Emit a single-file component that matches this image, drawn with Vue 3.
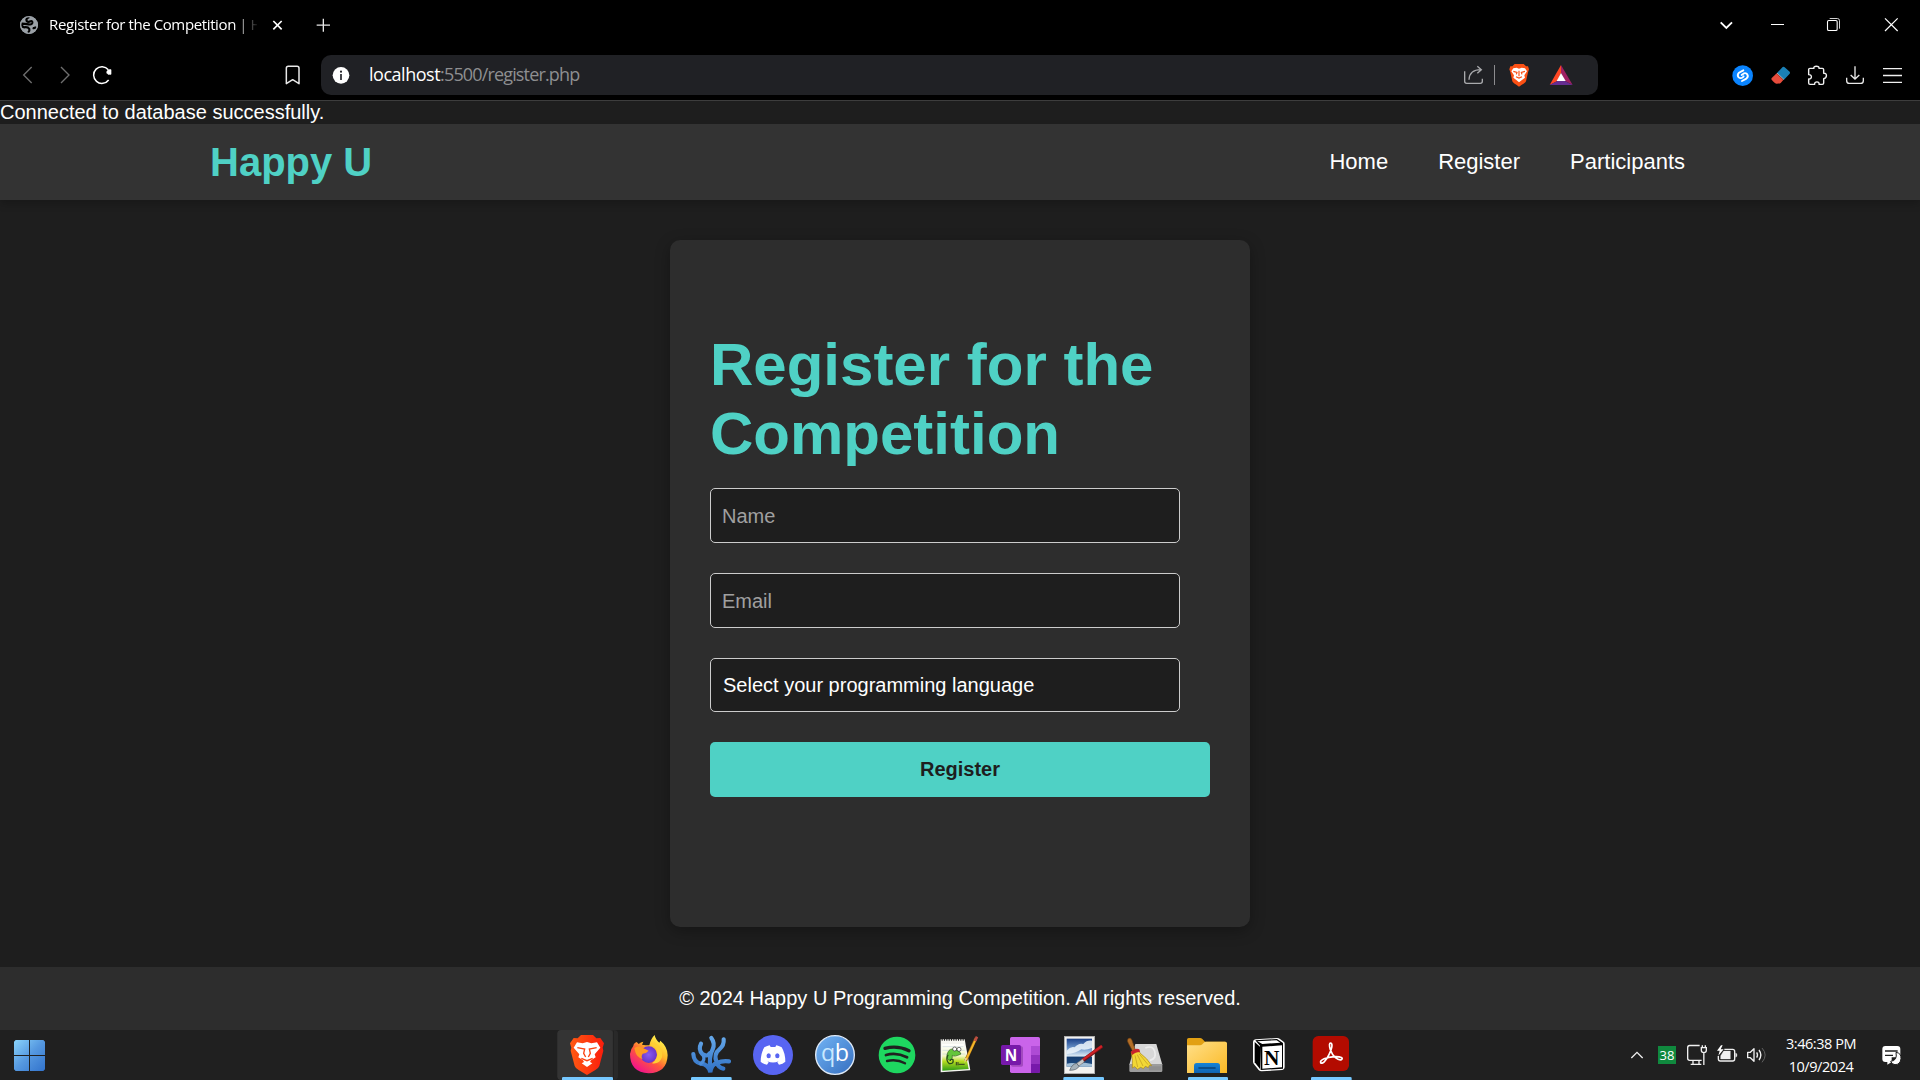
<script setup>
import { ref } from 'vue'

const navLinks = ['Home', 'Register', 'Participants']
const name = ref('')
const email = ref('')
const language = ref('')
</script>

<template>
  <div class="screen">
    <div class="tabs">
      <svg class="ic globe" viewBox="42 0 90 150">
        <circle cx="87" cy="75" r="27" fill="#9aa0a6" />
        <path d="M88 51 Q76 56 80 63 Q84 68 92 64 Q98 62 97 69 Q95 75 86 73 Q74 71 66 71 Q64 79 72 82 Q84 80 88 87 Q90 92 84 98 M98 84 Q106 86 108 80" fill="none" stroke="#000" stroke-width="6.500" />
        <circle cx="87" cy="75" r="25" fill="none" stroke="#9aa0a6" stroke-width="4" />
      </svg>
      <div class="tab-title">Register for the Competition | H</div>
      <svg class="ic tab-close" viewBox="786 0 90 150"><path d="M820 63 L845 88 M845 63 L820 88" stroke="#fff" stroke-width="5" /></svg>
      <svg class="ic tab-plus" viewBox="924 0 90 150"><path d="M970 56 V95 M950 75.500 H990" stroke="#e8e8e8" stroke-width="4" /></svg>
      <div class="grow"></div>
      <svg class="ic" viewBox="783 0 90 150"><path d="M812 67 L829 84 L846 67" fill="none" stroke="#fff" stroke-width="5.500" /></svg>
      <svg class="ic win-min" viewBox="936 0 90 150"><path d="M963 73.500 H1002" stroke="#fff" stroke-width="3" /></svg>
      <svg class="ic win-max" viewBox="1104 0 90 150">
        <rect x="1132.500" y="61.500" width="29" height="30" rx="4" fill="none" stroke="#fff" stroke-width="3.300" />
        <path d="M1139 55.500 H1162 Q1168.500 55.500 1168.500 62 V86" fill="none" stroke="#d0d0d0" stroke-width="3" />
      </svg>
      <svg class="ic win-close" viewBox="1278 0 90 150"><path d="M1305 55 L1343 93 M1343 55 L1305 93" stroke="#fff" stroke-width="3.600" /></svg>
    </div>

    <div class="toolbar">
      <svg class="ic back" viewBox="36 150 90 150"><path d="M95 201 L71 225 L95 249" fill="none" stroke="#6f6f6f" stroke-width="4" /></svg>
      <svg class="ic fwd" viewBox="150 150 90 150"><path d="M183 201 L207 225 L183 249" fill="none" stroke="#6f6f6f" stroke-width="4" /></svg>
      <svg class="ic reload" viewBox="261 150 90 150">
        <path d="M325 209 A25 25 0 1 0 326 240" fill="none" stroke="#fff" stroke-width="4.500" />
        <path d="M333 209 V223 H324 Q318 220 321 213 Q326 208 333 209 Z" fill="#fff" stroke="#fff" stroke-width="2" />
      </svg>
      <svg class="ic bookmark" viewBox="834 150 90 150"><path d="M859 251 V205 Q859 199 865 199 H891 Q897 199 897 205 V251 L878 239 Z" fill="none" stroke="#e8e8e8" stroke-width="4.500" stroke-linejoin="round" /></svg>
      <div class="address">
        <svg class="ic info" viewBox="978 150 90 150">
          <circle cx="1023" cy="226" r="25" fill="#fff" />
          <circle cx="1023" cy="215" r="3.200" fill="#202127" />
          <path d="M1023 222 V240" stroke="#202127" stroke-width="5" />
        </svg>
        <div class="url"><span class="host">localhost</span>:5500/register.php</div>
        <div class="grow"></div>
        <svg class="ic" viewBox="24 150 90 150">
          <path d="M44 214 V244 Q44 250 50 250 H91 Q97 250 97 244 V236 M57 239 C58 220 70 209 93 209 M82 199 L94 209 L82 220" fill="none" stroke="#a9aaad" stroke-width="4" />
        </svg>
        <div class="divider"></div>
        <svg class="ic brave" viewBox="162 150 90 150">
          <path d="M194 192 H221 L228 199 H234 L237 208 L234 217 L228 244 Q226 249 207 260 Q189 249 187 244 L181 217 L178 208 L181 199 H187 Z" fill="#fb5014" />
          <path d="M190 205 L200 203 L207 206 L215 203 L225 205 L231 214 L223 226 L225 233 L217 239 L207 247 L198 239 L190 233 L192 226 L184 214 Z" fill="#fff" />
          <path d="M190 214 L201 217 L199 223 M225 214 L214 217 L216 223 M207 212 V229 M198 230 L207 234 L216 230" fill="none" stroke="#fb5014" stroke-width="3.500" />
        </svg>
        <svg class="ic bat" viewBox="288 150 90 150">
          <path d="M333 195 L299 255 L322 243 L333 219 Z" fill="#ff4724" />
          <path d="M333 195 L368 255 L345 243 L333 219 Z" fill="#9e1f63" />
          <path d="M299 255 H368 L345 243 H322 Z" fill="#662d91" />
          <path d="M333 219 L320 243 H347 Z" fill="#fff" />
        </svg>
      </div>
      <div class="grow"></div>
      <svg class="ic" viewBox="834 150 90 150">
        <circle cx="878" cy="227" r="31" fill="#0a84ff" />
        <path d="M880 211 L867 218 Q860 225 866 232 Q872 237 878 232 L881 229 M876 243 L889 236 Q897 229 891 222 Q885 217 879 222 L875 225" fill="none" stroke="#fff" stroke-width="5.500" stroke-linecap="round" />
      </svg>
      <svg class="ic eraser" viewBox="945 150 90 150">
        <path d="M981 219 L998 201 Q1001 199 1004 202 L1019 215 Q1021 218 1019 221 L1002 239 Z" fill="#1a80b6" />
        <path d="M980 220 L1000 240 L992 249 Q990 251 980 251 Q975 251 965 239 Q963 236 966 233 Z" fill="#e74c3c" />
        <path d="M981 219 L1002 239" stroke="#f1e9e4" stroke-width="2" />
      </svg>
      <svg class="ic puzzle" viewBox="1059 150 90 150">
        <path d="M1076 208 Q1076 205 1080 205 H1092 C1088 197 1109 196 1107 205 H1117 Q1121 205 1121 209 V220 C1132 218 1132 234 1121 236 V249 Q1121 253 1117 253 H1107 C1110 243 1092 243 1094 253 H1080 Q1076 253 1076 249 V237 C1087 238 1087 223 1076 224 Z" fill="none" stroke="#f0f0f0" stroke-width="4.200" stroke-linejoin="round" />
      </svg>
      <svg class="ic dl" viewBox="1170 150 90 150"><path d="M1215 199 V236 M1202 225 L1215 237 L1228 225 M1190 233 V242 Q1190 250 1198 250 H1232 Q1240 250 1240 242 V233" fill="none" stroke="#e8e8e8" stroke-width="4" /></svg>
      <svg class="ic menu" viewBox="1281 150 90 150"><path d="M1299 206 H1356 M1299 226.500 H1356 M1299 247 H1356" stroke="#f0f0f0" stroke-width="4" /></svg>
    </div>

    <div class="page">
      <div class="notice">Connected to database successfully.</div>
      <header class="site-header">
        <div class="container">
          <h1 class="logo">Happy U</h1>
          <nav class="nav">
            <a v-for="link in navLinks" :key="link">{{ link }}</a>
          </nav>
        </div>
      </header>
      <main class="main">
        <section class="card">
          <h2 class="title">Register for the Competition</h2>
          <form class="form" @submit.prevent>
            <input v-model="name" class="field" type="text" placeholder="Name" />
            <input v-model="email" class="field" type="email" placeholder="Email" />
            <select v-model="language" class="field select">
              <option value="">Select your programming language</option>
            </select>
            <button class="submit" type="submit">Register</button>
          </form>
        </section>
      </main>
      <footer class="site-footer">© 2024 Happy U Programming Competition. All rights reserved.</footer>
    </div>

    <div class="taskbar">
      <svg class="start" viewBox="42 267 93 93">
        <defs>
          <linearGradient id="win" x1="42" y1="267" x2="135" y2="360" gradientUnits="userSpaceOnUse">
            <stop offset="0" stop-color="#8ad4fb" /><stop offset=".5" stop-color="#5598e0" /><stop offset="1" stop-color="#3273cc" />
          </linearGradient>
        </defs>
        <path d="M47 267 H87 V312 H42 V272 Z M90 267 H130 L135 272 V312 H90 Z M42 315 H87 V360 H47 L42 355 Z M90 315 H135 V355 L130 360 H90 Z" fill="url(#win)" />
      </svg>

      <div class="apps">
        <!-- Brave -->
        <svg class="app" viewBox="48 30 186 150">
          <defs><linearGradient id="brv"><stop offset="0" stop-color="#ff5a12" /><stop offset="1" stop-color="#fb1d0c" /></linearGradient></defs>
          <rect x="52" y="30" width="182" height="150" rx="12" fill="#292929" />
          <rect x="52" y="30" width="168" height="150" rx="12" fill="#343434" />
          <path d="M220 32 V178" stroke="#1c1c1c" stroke-width="2" />
          <path d="M123 45 H159 L169 55 L181 54 L192 70 L188 83 L190 92 L178 138 Q176 144 166 150 L141 165 L116 150 Q106 144 104 138 L92 92 L94 83 L90 70 L101 54 L113 55 Z" fill="url(#brv)" />
          <path d="M111 67 L128 70 L141 66 L154 70 L171 67 L181 83 L164 103 L167 112 L153 121 L150 126 L157 130 L141 141 L125 130 L132 126 L129 121 L115 112 L118 103 L101 83 Z" fill="#fff" />
          <path d="M112 83 L134 87 L131 100 L137 111 M170 83 L148 87 L151 100 L145 111 M124 115 L141 122 L158 115" fill="none" stroke="#fb4311" stroke-width="4" />
          <path d="M66 180 V174 Q66 171 70 171 H215 Q219 171 219 174 V180 Z" fill="#76c8ff" />
        </svg>
        <!-- Firefox -->
        <svg class="app" viewBox="234 30 186 150">
          <defs>
            <linearGradient id="ff" x1=".85" y1=".1" x2=".25" y2=".95"><stop offset="0" stop-color="#fff44f" /><stop offset=".35" stop-color="#ffb829" /><stop offset=".6" stop-color="#ff5a3a" /><stop offset="1" stop-color="#f0138b" /></linearGradient>
            <radialGradient id="ffp"><stop offset="0" stop-color="#8a5bf0" /><stop offset="1" stop-color="#6a35c8" /></radialGradient>
          </defs>
          <path d="M290 66 L296 72 Q302 66 310 65 L306 74 Q316 76 328 76 Q332 56 344 45 Q346 58 358 68 L361 62 Q383 80 383 106 Q381 159 326 160 Q270 157 270 102 Q272 86 280 78 Q280 70 290 66 Z" fill="url(#ff)" />
          <circle cx="326" cy="104" r="25" fill="url(#ffp)" />
          <path d="M283 84 Q294 76 304 82 L326 92 Q320 100 308 101 Q302 110 308 118 Q290 112 286 96 Z" fill="#ff9a22" />
          <path d="M332 76 Q350 78 352 96 Q354 116 336 130 Q358 134 366 112 Q372 86 346 68 Q338 66 332 76Z" fill="#ffcf34" />
        </svg>
        <!-- VSCodium -->
        <svg class="app" viewBox="420 30 186 150">
          <defs><linearGradient id="cod" gradientUnits="userSpaceOnUse" x1="0" y1="45" x2="0" y2="165"><stop offset="0" stop-color="#68abec" /><stop offset="1" stop-color="#2c6cc0" /></linearGradient></defs>
          <path d="M483 71 Q474 88 487 102 Q502 112 509 100 M460 102 Q461 126 482 131 Q505 132 511 157 Q514 134 530 129 Q548 121 567 124 M514 54 Q526 70 518 88 Q505 112 512 150 M551 58 Q553 76 538 88 Q520 102 530 127 Q535 143 550 146" fill="none" stroke="url(#cod)" stroke-width="12.500" stroke-linecap="round" />
          <path d="M482 131 Q497 121 489 104" fill="none" stroke="#4b8edb" stroke-width="10" stroke-linecap="round" />
          <path d="M453 180 V174 Q453 171 457 171 H571 Q575 171 575 174 V180 Z" fill="#76c8ff" />
        </svg>
        <!-- Discord -->
        <svg class="app" viewBox="606 30 186 150">
          <circle cx="699" cy="105" r="60" fill="#5865f2" />
          <path d="M673 82 Q682 77 689 76 L692 81 H706 L709 76 Q716 77 725 82 Q736 100 736 125 Q728 132 717 134 L712 127 L716 124 Q699 131 682 124 L686 127 L681 134 Q670 132 662 125 Q662 100 673 82 Z" fill="#fff" />
          <ellipse cx="686" cy="107" rx="6.500" ry="7.500" fill="#5865f2" /><ellipse cx="712" cy="107" rx="6.500" ry="7.500" fill="#5865f2" />
        </svg>
        <!-- qBittorrent -->
        <svg class="app" viewBox="-48 30 186 150">
          <defs><linearGradient id="qb" x1="0" y1="0" x2="1" y2="1"><stop offset="0" stop-color="#72b4f5" /><stop offset="1" stop-color="#356ebf" /></linearGradient></defs>
          <circle cx="45" cy="105" r="58" fill="url(#qb)" stroke="#dfeaf8" stroke-width="4" />
          <text x="3" y="124" class="qb" fill="#c8e8ff">q</text><text x="44" y="124" class="qb" fill="#fff">b</text>
        </svg>
        <!-- Spotify -->
        <svg class="app" viewBox="138 30 186 150">
          <circle cx="231" cy="105" r="55" fill="#1ed760" />
          <path d="M195 85 Q232 75 267 92" fill="none" stroke="#202020" stroke-width="10" stroke-linecap="round" />
          <path d="M198 105 Q230 96 261 112" fill="none" stroke="#202020" stroke-width="8.500" stroke-linecap="round" />
          <path d="M201 123 Q230 116 255 130" fill="none" stroke="#202020" stroke-width="7" stroke-linecap="round" />
        </svg>
        <!-- Notepad++ -->
        <svg class="app" viewBox="324 30 186 150">
          <defs><linearGradient id="npp" x2="0" y2="1"><stop offset="0" stop-color="#fff" /><stop offset=".45" stop-color="#f4f7c8" /><stop offset=".65" stop-color="#b8dc20" /><stop offset="1" stop-color="#2f9d16" /></linearGradient></defs>
          <path d="M362 58 H434 L451 151 L362 157 Z" fill="#f5f5f0" />
          <path d="M366 72 H431 L446 147 L367 152 Z" fill="url(#npp)" />
          <path d="M365 59 H434" stroke="#222" stroke-width="7" stroke-dasharray="3 4" />
          <path d="M368 80 H430 M368 91 H434 M368 102 H436" stroke="#b9c9d8" stroke-width="1.500" />
          <path d="M384 96 Q390 84 403 88 Q421 92 423 102 Q402 112 397 106 Q398 124 386 120 Q376 112 384 96 Z" fill="#65c53b" stroke="#32601e" stroke-width="2" />
          <path d="M384 104 Q376 122 388 131 Q402 132 399 119 Q391 116 391 123" fill="none" stroke="#274f1b" stroke-width="4" />
          <circle cx="404" cy="87" r="6" fill="#fff" stroke="#333" stroke-width="2" /><circle cx="417" cy="88" r="6" fill="#fff" stroke="#333" stroke-width="2" />
          <path d="M409 126 V136 M414 126 V136 M416 133 H434" stroke="#222" stroke-width="2.500" />
          <path d="M468 54 L437 122" stroke="#8b5a12" stroke-width="9" /><path d="M467 58 L438 120" stroke="#f5b629" stroke-width="6" />
          <path d="M471 50 L465 63" stroke="#bd4d42" stroke-width="8" /><path d="M441 115 L434 129 L434 114 Z" fill="#ecd2a0" />
        </svg>
        <!-- OneNote -->
        <svg class="app" viewBox="510 30 186 150">
          <rect x="570" y="51" width="90" height="108" rx="5" fill="#ca64ea" />
          <path d="M633 78 H660 V105 H633 Z" fill="#ae4bd5" /><path d="M633 105 H660 V132 H633 Z" fill="#9332bf" /><path d="M633 132 H660 V154 Q660 159 655 159 H633 Z" fill="#7719aa" />
          <rect x="573" y="79" width="36" height="61" rx="5" fill="#a24abf" />
          <rect x="543" y="75" width="60" height="60" rx="5" fill="#7719aa" />
          <text x="573" y="122" class="onenote" fill="#fff" text-anchor="middle">N</text>
        </svg>
        <!-- Paint tool -->
        <svg class="app" viewBox="696 30 186 150">
          <defs><linearGradient id="sky" x2="0" y2="1"><stop offset="0" stop-color="#193f88" /><stop offset=".35" stop-color="#6e97cb" /><stop offset=".62" stop-color="#dbe9f4" /><stop offset=".66" stop-color="#153d71" /><stop offset="1" stop-color="#214d81" /></linearGradient></defs>
          <rect x="733" y="49" width="91" height="112" fill="#f2f2f0" stroke="#b1b1b1" stroke-width="2" />
          <rect x="740" y="56" width="76" height="84" fill="url(#sky)" />
          <path d="M740 92 Q752 78 764 82 Q776 68 790 72 Q800 60 816 62 V84 Q796 92 784 88 Q768 100 740 102 Z" fill="#eef6fc" opacity=".85" />
          <path d="M740 131 Q758 126 775 132 L795 128 L816 132 V140 H740 Z" fill="#9fbdd6" />
          <path d="M846 79 L786 123" stroke="#701216" stroke-width="11" /><path d="M846 78 L786 121" stroke="#cf2026" stroke-width="7" />
          <path d="M788 117 L770 130 L776 138 L793 126 Z" fill="#c8c8c8" stroke="#666" stroke-width="1.500" />
          <path d="M770 130 Q756 132 749 151 Q771 151 777 139 Z" fill="#a5b1ba" stroke="#4b555d" stroke-width="2" />
          <path d="M730 180 V174 Q730 171 734 171 H848 Q852 171 852 174 V180 Z" fill="#76c8ff" />
        </svg>
        <!-- Disk cleanup -->
        <svg class="app" viewBox="42 30 186 150">
          <path d="M106 72 H169 L187 134 H88 Z" fill="#d7d7d7" /><path d="M88 132 H187 V152 Q187 156 183 156 H92 Q88 156 88 152 Z" fill="#9c9c9c" />
          <path d="M136 84 Q158 75 164 94 Q171 116 150 121" fill="none" stroke="#ececec" stroke-width="5" />
          <path d="M150 139 V151 M156 139 V151 M162 139 V151 M168 139 V151 M174 139 V151 M180 139 V151" stroke="#777" stroke-width="2" />
          <path d="M84 56 Q92 50 96 61 L106 90 L98 94 L85 70 Q80 62 84 56 Z" fill="#b26e26" stroke="#6b3d10" stroke-width="2" />
          <path d="M94 97 Q102 85 117 91 L120 99 Q143 116 155 137 L148 136 L145 143 L136 139 L130 146 L122 142 L113 148 L104 140 L97 144 Q99 121 94 97 Z" fill="#f2d836" stroke="#a8841a" stroke-width="2" />
          <path d="M105 106 L113 141 M112 104 L129 138 M118 102 L144 134" stroke="#bd9921" stroke-width="2" />
          <path d="M92 95 Q106 83 118 88 L120 96 Q106 96 97 105 Z" fill="#c7242b" />
        </svg>
        <!-- File Explorer -->
        <svg class="app" viewBox="228 30 186 150">
          <defs><linearGradient id="fold" x1="0" y1="0" x2="1" y2="1"><stop offset="0" stop-color="#ffe08a" /><stop offset="1" stop-color="#fbb924" /></linearGradient><linearGradient id="fb" x2="0" y2="1"><stop offset="0" stop-color="#1683d7" /><stop offset="1" stop-color="#0f64b5" /></linearGradient></defs>
          <path d="M261 59 Q261 54 266 54 H300 Q304 54 307 57 L315 65 H376 V100 H261 Z" fill="#e2a013" />
          <path d="M261 76 H300 Q304 76 307 73 L313 67 Q315 65 318 65 H376 Q381 65 381 70 V159 H261 Z" fill="url(#fold)" />
          <path d="M282 159 V137 Q282 129 290 129 H352 Q360 129 360 137 V159 Z" fill="url(#fb)" />
          <path d="M297 144 H345" stroke="#0b4377" stroke-width="5" stroke-linecap="round" />
          <path d="M264 180 V174 Q264 171 268 171 H380 Q384 171 384 174 V180 Z" fill="#76c8ff" />
        </svg>
        <!-- Notion -->
        <svg class="app" viewBox="414 30 186 150">
          <path d="M467 58 L531 54 Q536 54 540 57 L552 66 Q554 68 554 72 V142 Q554 149 547 150 L485 154 Q479 154 476 150 L462 133 Q459 129 459 125 V66 Q459 59 467 58 Z" fill="#fff" />
          <path d="M464 66 L480 80 V147 L464 127 Z" fill="#000" />
          <path d="M466 61 L531 57 L549 69 V146 L482 150 L480 77 Z" fill="#000" />
          <path d="M472 64 L530 60.500 L541 68 L487 72 Z" fill="#fff" />
          <path d="M487 80 L546 76 V142 L487 146 Z" fill="#fff" />
          <text x="515" y="134" class="notion" fill="#000" text-anchor="middle">N</text>
        </svg>
        <!-- Acrobat -->
        <svg class="app" viewBox="600 30 186 150">
          <rect x="638" y="48" width="109" height="105" rx="17" fill="#b30b00" />
          <path d="M662 128 C659 120 679 111 703 110 C724 109 731 115 724 119 C714 122 698 109 691 89 C687 75 688 69 692 69 C699 70 696 87 687 104 C678 123 666 134 662 128 Z" fill="none" stroke="#fff" stroke-width="5" stroke-linejoin="round" />
          <path d="M633 180 V174 Q633 171 637 171 H751 Q755 171 755 174 V180 Z" fill="#76c8ff" />
        </svg>
      </div>

      <div class="tray">
        <svg class="ic" viewBox="66 30 90 150"><path d="M94 114 L111 97 L128 114" fill="none" stroke="#f0f0f0" stroke-width="4" /></svg>
        <div class="temp">38</div>
        <svg class="ic" viewBox="246 30 90 150">
          <path d="M299 76.500 H269 Q263 76.500 263 83 V115 Q263 121 269 121 H305 M279 122 V133 M297 122 V133 M272 133 H304" fill="none" stroke="#f0f0f0" stroke-width="4" />
          <path d="M304 83 H319 V91 Q319 98 311.500 98 Q304 98 304 91 Z M307 83 V76 M316 83 V76 M311.500 98 V135" fill="none" stroke="#f0f0f0" stroke-width="4" />
        </svg>
        <svg class="ic" viewBox="336 30 90 150">
          <path d="M373 88 H398 Q404 88 404 94 V117 Q404 123 398 123 H361 Q355 123 355 116 V108" fill="none" stroke="#f0f0f0" stroke-width="4" />
          <path d="M407 99 Q411 100 411 105 Q411 111 407 112 Z M362 117 V107 L371 93 H391 V117 Z" fill="#f0f0f0" stroke="#f0f0f0" />
          <path d="M363 76 L351 92 H359 L355 107 L371 88 H362 L368 76 Z" fill="#fff" />
        </svg>
        <svg class="ic" viewBox="426 30 90 150">
          <path d="M443 97 H451 L462 86 V124 L451 113 H443 Z M470 97 Q475 105 470 113 M477 90 Q488 105 477 120" fill="none" stroke="#f0f0f0" stroke-width="4" stroke-linejoin="round" />
          <path d="M486 84 Q505 105 486 127" fill="none" stroke="#606060" stroke-width="3" />
        </svg>
        <div class="clock"><span class="time">3:46:38 PM</span><span class="date">10/9/2024</span></div>
        <svg class="ic" viewBox="828 30 90 150">
          <path d="M856 78 H892 Q901 78 901 87 V112 H875 V126 L862 134 V126 H856 Q847 126 847 117 V87 Q847 78 856 78 Z" fill="#fff" />
          <path d="M855 93 H893 M855 106 H879" stroke="#202020" stroke-width="4" />
          <path d="M888 97 Q904 99 903 116 Q901 134 885 134 Q875 133 872 124 Q893 122 888 97 Z" fill="#fff" stroke="#202020" stroke-width="3" />
        </svg>
      </div>
    </div>
  </div>
</template>

<style>
body {
  margin: 0;
  background: #1e1e1e;
  overflow: hidden;
}
</style>

<style scoped>
.screen {
  width: 1920px;
  height: 1080px;
  display: flex;
  flex-direction: column;
  font-family: "Liberation Sans", Arial, sans-serif;
  color: #fff;
}
.ic { width: 30px; height: 50px; flex: none; display: block; }
.grow { flex: 1; }

.tabs, .toolbar {
  display: flex;
  align-items: center;
  height: 50px;
  flex: none;
  background: #000;
  box-sizing: border-box;
  padding: 0 14px;
  font-family: "Open Sans", "Noto Sans", sans-serif;
}
.tab-title {
  margin-left: 5px;
  width: 208px;
  white-space: nowrap;
  font-size: 15px;
  letter-spacing: -0.37px;
  word-spacing: -0.2px;
  line-height: 48px;
  height: 50px;
  -webkit-mask-image: linear-gradient(90deg, #000 185px, transparent 210px);
  mask-image: linear-gradient(90deg, #000 185px, transparent 210px);
}
.tab-close { margin-left: 5px; }
.tab-plus { margin-left: 16px; }
.win-min { margin-left: 21px; }
.win-max { margin-left: 26px; }
.win-close { margin-left: 28px; }

.toolbar {
  height: 51px;
  padding: 0 13px 0 12px;
  border-bottom: 1px solid #3d3d3d;
}
.fwd { margin-left: 8px; }
.reload { margin-left: 7px; }
.bookmark { margin-left: 161px; }
.address {
  display: flex;
  align-items: center;
  box-sizing: border-box;
  width: 1277px;
  height: 40px;
  margin-left: 13px;
  padding: 0 22px 0 5px;
  border-radius: 10px;
  background: #202125;
}
.url {
  margin-left: 13px;
  height: 40px;
  font-size: 18px;
  letter-spacing: -0.85px;
  line-height: 39px;
  color: #8e8f91;
}
.host { color: #fff; letter-spacing: -0.48px; }
.divider { width: 1px; height: 20px; margin: 0 9px 0 6px; background: #8c8c8f; }
.bat { margin-left: 12px; }
.eraser { margin-left: 7px; }
.puzzle { margin-left: 8px; }
.dl, .menu { margin-left: 7px; }

.page {
  display: flex;
  flex-direction: column;
  height: 929px;
  background: #1e1e1e;
  font-size: 20px;
  line-height: 23px;
}
.notice { height: 23px; }
.site-header {
  padding: 15px 0;
  background: #333;
  box-shadow: 0 4px 8px rgba(0, 0, 0, 0.2);
}
.container {
  display: flex;
  align-items: center;
  justify-content: space-between;
  width: 1500px;
  margin: 0 auto;
}
.logo {
  margin: 0;
  font-size: 40px;
  line-height: 46px;
  color: #4fd1c5;
}
.nav { display: flex; }
.nav a { margin: 0 25px 1px; font-size: 22px; line-height: 25px; }
.main { flex: 1; }
.card {
  box-sizing: border-box;
  width: 580px;
  height: 687px;
  margin: 40px auto;
  padding: 90px 40px 0;
  border-radius: 10px;
  background: #2d2d2d;
  box-shadow: 0 4px 15px rgba(0, 0, 0, 0.3);
}
.title {
  margin: 0 0 20px;
  font-size: 60px;
  line-height: 69px;
  color: #4fd1c5;
}
.form { display: flex; flex-direction: column; }
.field {
  box-sizing: border-box;
  width: 470px;
  height: 55px;
  margin: 0 0 30px;
  padding: 2px 11px 0;
  border: 1px solid #ccc;
  border-radius: 5px;
  outline: none;
  background: #1e1e1e;
  color: #fff;
  font: 20px "Liberation Sans", Arial, sans-serif;
}
.field::placeholder { color: #a0a0a0; opacity: 1; }
.select { height: 54px; padding: 0 12px; appearance: none; }
.submit {
  height: 55px;
  padding: 0;
  border: 0;
  border-radius: 5px;
  background: #4fd1c5;
  color: #1e1e1e;
  font: bold 20px "Liberation Sans", Arial, sans-serif;
}
.site-footer {
  height: 63px;
  line-height: 63px;
  background: #2d2d2d;
  text-align: center;
}

.taskbar {
  display: flex;
  align-items: center;
  height: 50px;
  background: #202020;
  font-family: "Open Sans", "Noto Sans", sans-serif;
}
.start { width: 31px; height: 31px; margin-left: 14px; }
.apps { display: flex; margin-left: 511px; }
.app { width: 62px; height: 50px; flex: none; display: block; }
.qb { font: 70px "Open Sans", sans-serif; }
.onenote { font: bold 46px "Open Sans", sans-serif; }
.notion { font: bold 64px "Liberation Serif", serif; }
.tray { display: flex; align-items: center; margin-left: 260px; }
.temp {
  width: 18px;
  height: 18px;
  margin: 0 6px;
  background: #10893e;
  font-size: 13px;
  line-height: 18px;
  text-align: center;
}
.clock {
  display: flex;
  flex-direction: column;
  align-items: center;
  width: 98px;
  margin-right: 6px;
  margin-bottom: 1px;
  font-size: 14.5px;
  letter-spacing: -0.45px;
  line-height: 23px;
}
</style>
